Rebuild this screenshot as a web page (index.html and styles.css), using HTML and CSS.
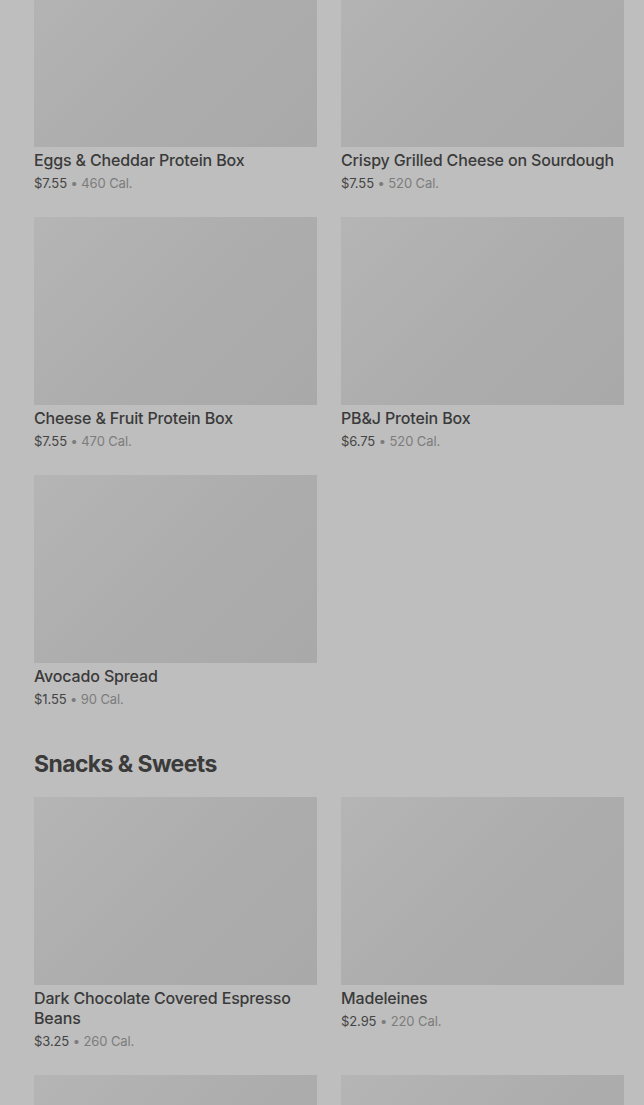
FILE: index.html
```html
<!DOCTYPE html>
<html>
<head>
<meta charset="utf-8">
<link rel="stylesheet" href="styles.css">
</head>
<body>
<main class="page">
  <section class="section">
    <div class="grid">
      <div class="card"><div class="thumb"></div><div class="name">Eggs &amp; Cheddar Protein Box</div><div class="meta"><span class="price">$7.55</span> • 460 Cal.</div></div>
      <div class="card"><div class="thumb"></div><div class="name">Crispy Grilled Cheese on Sourdough</div><div class="meta"><span class="price">$7.55</span> • 520 Cal.</div></div>
      <div class="card"><div class="thumb"></div><div class="name">Cheese &amp; Fruit Protein Box</div><div class="meta"><span class="price">$7.55</span> • 470 Cal.</div></div>
      <div class="card"><div class="thumb"></div><div class="name">PB&amp;J Protein Box</div><div class="meta"><span class="price">$6.75</span> • 520 Cal.</div></div>
      <div class="card"><div class="thumb"></div><div class="name">Avocado Spread</div><div class="meta"><span class="price">$1.55</span> • 90 Cal.</div></div>
    </div>
  </section>
  <section class="section">
    <h2 class="heading">Snacks &amp; Sweets</h2>
    <div class="grid">
      <div class="card"><div class="thumb"></div><div class="name">Dark Chocolate Covered Espresso Beans</div><div class="meta"><span class="price">$3.25</span> • 260 Cal.</div></div>
      <div class="card"><div class="thumb"></div><div class="name">Madeleines</div><div class="meta"><span class="price">$2.95</span> • 220 Cal.</div></div>
      <div class="card"><div class="thumb"></div></div>
      <div class="card"><div class="thumb"></div></div>
    </div>
  </section>
</main>
</body>
</html>
```
FILE: styles.css
```css
html, body {
  margin: 0;
  padding: 0;
  background: #bebebe;
  overflow: hidden;
}
body {
  font-family: Inter, "Noto Sans", sans-serif;
  color: #3a3a3a;
}
.page {
  margin-top: -41px;
  padding: 0 20px 0 34px;
}
.section {
  display: flex;
  flex-direction: column;
  margin-bottom: 40px;
}
.heading {
  margin: 0 0 18px;
  font-size: 23px;
  line-height: 30px;
  font-weight: 700;
  letter-spacing: -0.6px;
  color: #3b3b3b;
}
.grid {
  display: grid;
  grid-template-columns: 283px 283px;
  column-gap: 24px;
  row-gap: 24px;
}
.card {
  display: flex;
  flex-direction: column;
}
.thumb {
  height: 188px;
  background: linear-gradient(135deg, #b5b5b5 0%, #adadad 50%, #a9a9a9 100%);
  margin-bottom: 3px;
}
.name {
  font-size: 16px;
  line-height: 20px;
  font-weight: 500;
  color: #3a3a3a;
  letter-spacing: -0.15px;
}
.meta {
  margin-top: 3px;
  font-size: 13px;
  line-height: 20px;
  color: #7c7c7c;
  letter-spacing: -0.1px;
}
.price {
  color: #444444;
}
```
